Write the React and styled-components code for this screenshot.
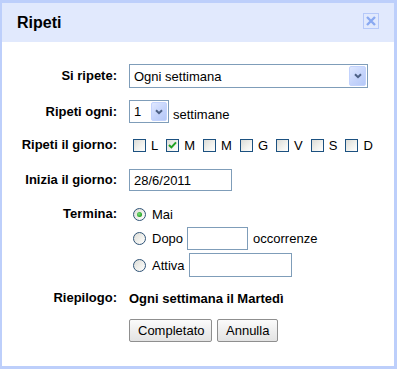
import React from "react";
import styled, { createGlobalStyle } from "styled-components";

const Global = createGlobalStyle`
  html, body { margin: 0; padding: 0; background: #fff; }
  body { font-family: "Liberation Sans", Arial, sans-serif; font-size: 13px; color: #000; }
`;

const Dialog = styled.div`
  box-sizing: border-box;
  width: 397px;
  height: 369px;
  border-style: solid;
  border-color: #bdcffb;
  border-width: 3px 3px 3px 2px;
  background: #fff;
  display: flex;
  flex-direction: column;
`;

const Header = styled.div`
  height: 39px;
  background: #e1e9fd;
  display: flex;
  align-items: center;
  justify-content: space-between;
  padding: 0 15px 0 15px;
`;

const Title = styled.div`
  font-weight: bold;
  font-size: 16px;
  color: #000;
  margin-top: 1px;
`;

const CloseBox = styled.div`
  box-sizing: border-box;
  width: 16px;
  height: 16px;
  border: 1px solid #b6c9f9;
  display: flex;
  align-items: center;
  justify-content: center;
  margin-top: -3px;
`;

const Form = styled.div`
  display: flex;
  flex-direction: column;
  padding-top: 22px;
`;

const Row = styled.div`
  display: grid;
  grid-template-columns: 115px 1fr;
  column-gap: 12px;
  align-items: ${(p) => (p.$top ? "start" : "center")};
  height: ${(p) => p.$h}px;
  margin-top: ${(p) => p.$mt || 0}px;
`;

const Label = styled.div`
  font-weight: bold;
  text-align: right;
  white-space: nowrap;
  line-height: ${(p) => p.$lh || 16}px;
`;

const Controls = styled.div`
  display: flex;
  align-items: center;
  height: 100%;
`;

const Options = styled.div`
  display: flex;
  flex-direction: column;
`;

const OptionLine = styled.div`
  display: flex;
  align-items: center;
  height: ${(p) => p.$h}px;
  margin-top: ${(p) => p.$mt || 0}px;
`;

const SelectBox = styled.div`
  box-sizing: border-box;
  width: ${(p) => p.$w}px;
  height: ${(p) => p.$h}px;
  border: 1px solid #7f9db9;
  display: flex;
  align-items: center;
  justify-content: space-between;
  padding: 1px 1px 1px 4px;
  background: #fff;
`;

const SelectArrow = styled.div`
  box-sizing: border-box;
  width: ${(p) => p.$w}px;
  height: 100%;
  border: 1px solid #c3d3fd;
  border-radius: 2px;
  background: linear-gradient(135deg, #dfe8ff 0%, #c5d4fb 55%, #b5c8f7 100%);
  display: flex;
  align-items: center;
  justify-content: center;
`;

const Suffix = styled.span`
  margin-left: ${(p) => p.$ml || 4}px;
  padding-top: ${(p) => p.$pt || 0}px;
`;

const DayItem = styled.label`
  display: inline-flex;
  align-items: center;
  margin-left: ${(p) => (p.$first ? 4 : 0)}px;
  margin-right: 8px;
`;

const Box = styled.span`
  box-sizing: border-box;
  width: 13px;
  height: 13px;
  border: 1px solid #1c5180;
  background: linear-gradient(135deg, #dcdcd7 0%, #f3f3ef 60%, #ffffff 100%);
  display: inline-flex;
  align-items: center;
  justify-content: center;
  margin-right: 5px;
`;

const Radio = styled.span`
  box-sizing: border-box;
  width: 13px;
  height: 13px;
  border-radius: 50%;
  border: 1px solid #2f5376;
  background: linear-gradient(135deg, #dcdcd7 0%, #f0f0ec 55%, #ffffff 100%);
  display: inline-flex;
  align-items: center;
  justify-content: center;
  margin-left: 4px;
  margin-right: 6px;
`;

const Dot = styled.span`
  width: 5px;
  height: 5px;
  border-radius: 50%;
  background: radial-gradient(circle at 40% 40%, #7fe07f 0%, #21a121 70%);
`;

const TextInput = styled.div`
  box-sizing: border-box;
  width: ${(p) => p.$w}px;
  height: ${(p) => p.$h}px;
  border: 1px solid #7f9db9;
  background: #fff;
  display: flex;
  align-items: center;
  padding-left: 4px;
  margin-left: ${(p) => p.$ml || 0}px;
`;

const Value = styled.div`
  font-weight: bold;
  white-space: nowrap;
`;

const Buttons = styled.div`
  display: flex;
  gap: 5px;
  height: 100%;
`;

const Button = styled.button`
  box-sizing: border-box;
  height: 23px;
  padding: 0 8px;
  font-family: "Liberation Sans", Arial, sans-serif;
  font-size: 13px;
  color: #000;
  border: 1px solid #8f8f8f;
  border-radius: 2px;
  background: linear-gradient(#fbfbfb, #ececec 60%, #e3e3e3);
  width: ${(p) => p.$w}px;
`;

const Chevron = () => (
  <svg width="8" height="6" viewBox="0 0 8 6">
    <path d="M1 1.2 L4 4.2 L7 1.2" fill="none" stroke="#4d6185" strokeWidth="2" />
  </svg>
);

const Check = () => (
  <svg width="9" height="8" viewBox="0 0 9 8">
    <path d="M1 4 L3.4 6.4 L8 1.4" fill="none" stroke="#21a121" strokeWidth="2" />
  </svg>
);

const days = ["L", "M", "M", "G", "V", "S", "D"];

export default function App() {
  return (
    <>
      <Global />
      <Dialog>
        <Header>
          <Title>Ripeti</Title>
          <CloseBox>
            <svg width="10" height="10" viewBox="0 0 10 10">
              <path d="M1 1 L9 9 M9 1 L1 9" stroke="#8aa9f1" strokeWidth="2.4" />
            </svg>
          </CloseBox>
        </Header>
        <Form>
          <Row $h={24}>
            <Label>Si ripete:</Label>
            <Controls>
              <SelectBox $w={239} $h={24}>
                <span>Ogni settimana</span>
                <SelectArrow $w={17}>
                  <Chevron />
                </SelectArrow>
              </SelectBox>
            </Controls>
          </Row>
          <Row $h={23} $mt={12}>
            <Label>Ripeti ogni:</Label>
            <Controls>
              <SelectBox $w={40} $h={23}>
                <span>1</span>
                <SelectArrow $w={16}>
                  <Chevron />
                </SelectArrow>
              </SelectBox>
              <Suffix $pt={5}>settimane</Suffix>
            </Controls>
          </Row>
          <Row $h={22} $mt={11}>
            <Label>Ripeti il giorno:</Label>
            <Controls>
              {days.map((d, i) => (
                <DayItem key={i} $first={i === 0}>
                  <Box>{i === 1 && <Check />}</Box>
                  {d}
                </DayItem>
              ))}
            </Controls>
          </Row>
          <Row $h={22} $mt={13}>
            <Label>Inizia il giorno:</Label>
            <Controls>
              <TextInput $w={103} $h={22}>28/6/2011</TextInput>
            </Controls>
          </Row>
          <Row $h={72} $mt={14} $top>
            <Label $lh={18}>Termina:</Label>
            <Options>
              <OptionLine $h={18}>
                <Radio>
                  <Dot />
                </Radio>
                Mai
              </OptionLine>
              <OptionLine $h={23} $mt={4}>
                <Radio />
                Dopo
                <TextInput $w={61} $h={23} $ml={4} />
                <Suffix $ml={5}>occorrenze</Suffix>
              </OptionLine>
              <OptionLine $h={24} $mt={3}>
                <Radio />
                Attiva
                <TextInput $w={103} $h={24} $ml={4} />
              </OptionLine>
            </Options>
          </Row>
          <Row $h={18} $mt={12}>
            <Label>Riepilogo:</Label>
            <Value>Ogni settimana il Martedì</Value>
          </Row>
          <Row $h={23} $mt={12}>
            <span />
            <Buttons>
              <Button $w={83}>Completato</Button>
              <Button $w={61}>Annulla</Button>
            </Buttons>
          </Row>
        </Form>
      </Dialog>
    </>
  );
}
